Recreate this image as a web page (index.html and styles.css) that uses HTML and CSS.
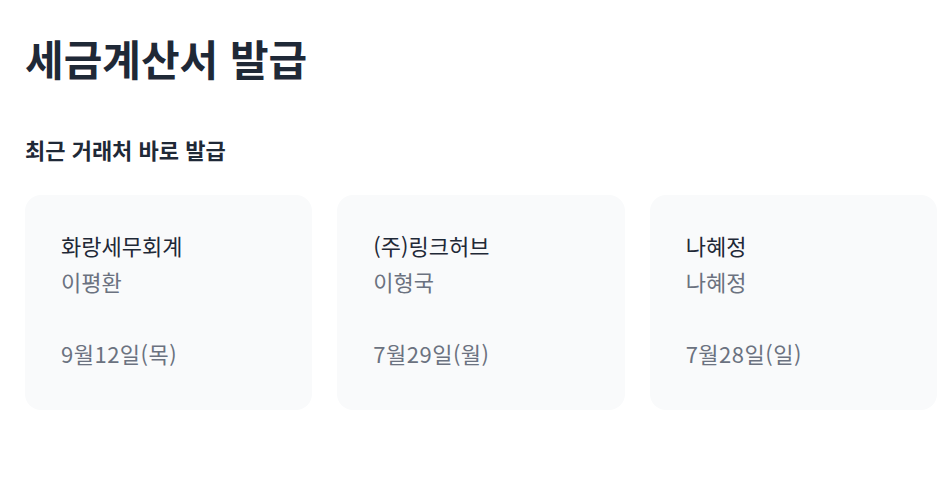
FILE: index.html
```html
<!DOCTYPE html>
<html lang="ko">
<head>
    <meta charset="UTF-8">
    <meta name="viewport" content="width=device-width, initial-scale=1.0">
    <title>세금계산서 발급</title>
    <link rel="stylesheet" href="styles.css">
</head>
<body>
    <div class="page">
        <h1>세금계산서 발급</h1>
        <h2>최근 거래처 바로 발급</h2>

        <div class="client-list">
            <div class="client-card">
                <div class="client-name">화랑세무회계</div>
                <div class="client-owner">이평환</div>
                <div class="client-date">9월12일(목)</div>
            </div>
            <div class="client-card">
                <div class="client-name">(주)링크허브</div>
                <div class="client-owner">이형국</div>
                <div class="client-date">7월29일(월)</div>
            </div>
            <div class="client-card">
                <div class="client-name">나혜정</div>
                <div class="client-owner">나혜정</div>
                <div class="client-date">7월28일(일)</div>
            </div>
        </div>
    </div>
</body>
</html>
```

FILE: styles.css
```css
body {
    margin: 0;
    font-family: "Noto Sans CJK KR", "Noto Sans", sans-serif;
    background: #fff;
    color: #1f2937;
}
.page {
    padding: 34px 25px;
    width: 912px;
}
h1 {
    margin: 0;
    font-size: 42px;
    line-height: 48px;
    font-weight: 700;
}
h2 {
    margin: 53px 0 32px;
    font-size: 22px;
    line-height: 28px;
    font-weight: 600;
}
.client-list {
    display: grid;
    grid-template-columns: repeat(3, 1fr);
    gap: 25px;
}
.client-card {
    background-color: #f9fafb;
    border-radius: 16px;
    padding: 32px 36px 39px;
    font-size: 22px;
    line-height: 36px;
}
.client-name {
    color: #1f2937;
}
.client-owner {
    color: #6b7280;
    margin-bottom: 36px;
}
.client-date {
    color: #6b7280;
    letter-spacing: 0.5px;
}
```
